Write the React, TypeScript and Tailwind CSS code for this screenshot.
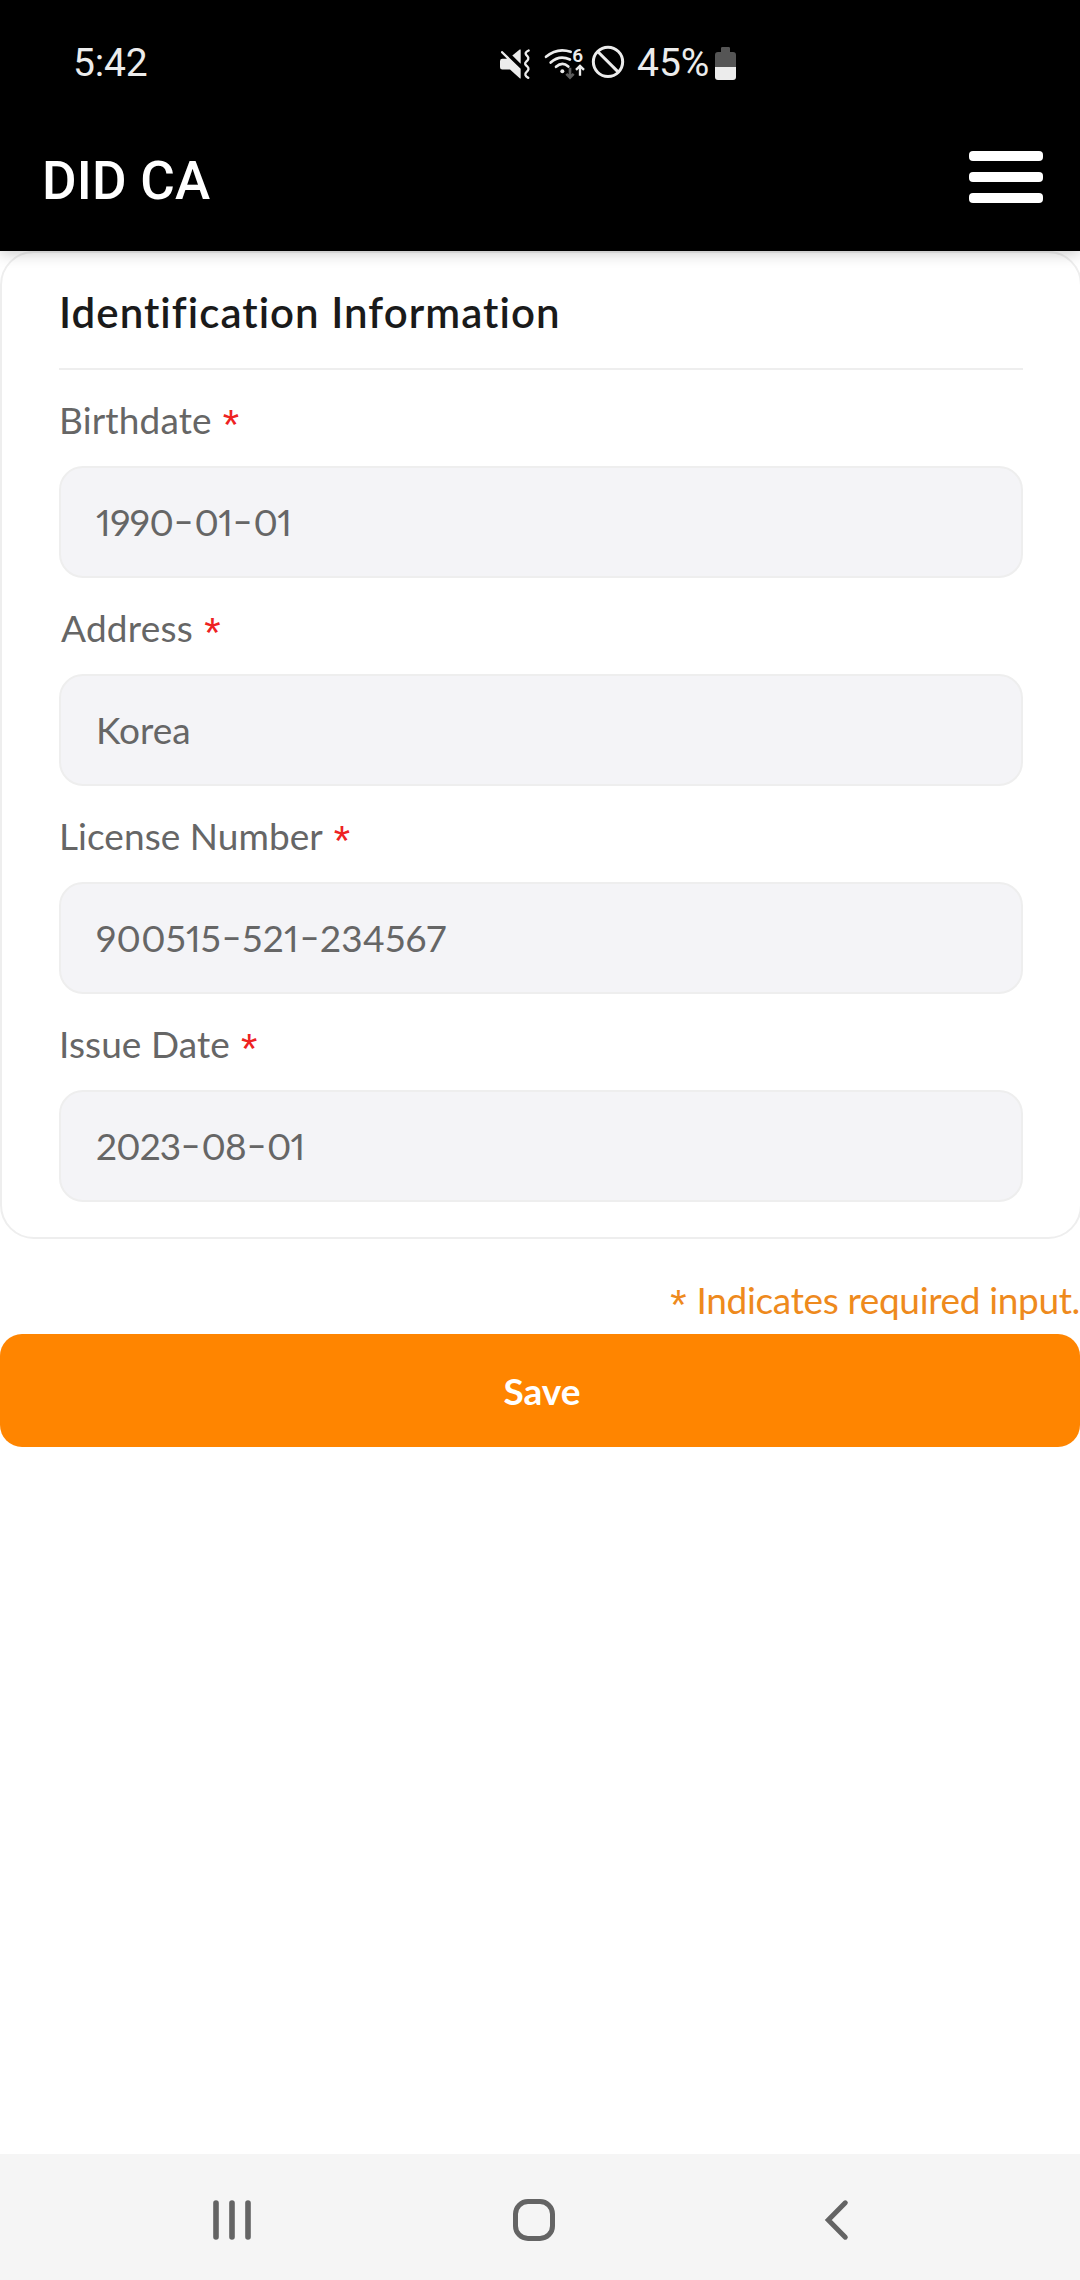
import { Fragment } from "react";

type FieldData = {
  label: string;
  value: string;
  labelClass: string;
  valueClass: string;
};

const fields: FieldData[] = [
  { label: "Birthdate", value: "1990-01-01", labelClass: "tracking-[0.15px]", valueClass: "tracking-[-0.5px]" },
  { label: "Address", value: "Korea", labelClass: "pl-[2px] tracking-[0.25px]", valueClass: "" },
  { label: "License Number", value: "900515-521-234567", labelClass: "tracking-[0.05px]", valueClass: "tracking-[0.3px]" },
  { label: "Issue Date", value: "2023-08-01", labelClass: "tracking-[0.1px]", valueClass: "tracking-[-0.8px]" },
];

function StatusIcons() {
  return (
    <svg viewBox="57 40 381 110" className="h-[37px] w-[127px]" fill="none">
      <path
        d="M63 66 Q62 60 68 61 L122 114 V143 H120 L90 116 H67 Q60 116 60 109 V91 Q60 84 67 84 H81 Z"
        fill="#ececec"
      />
      <path d="M97 74 L119 56 H122 V99 Z" fill="#ececec" />
      <path
        d="M146 59 C132 66 137 71 142 76 C148 82 144 88 139 92 C133 98 135 102 141 106 C148 112 146 118 140 123 C133 129 135 136 145 141"
        stroke="#ececec"
        strokeWidth="7"
        strokeLinecap="round"
      />
      <g stroke="#ececec" strokeWidth="8" strokeLinecap="round">
        <path d="M198 78 Q232 49 272 63" />
        <path d="M212 95 Q238 71 270 86" />
        <path d="M228 108 Q247 91 265 107" />
      </g>
      <circle cx="247" cy="121" r="6" fill="#ececec" />
      <text
        x="293"
        y="95"
        textAnchor="middle"
        fontSize="57"
        fill="#ececec"
        stroke="#000"
        strokeWidth="8"
        paintOrder="stroke"
        className="font-['Roboto',sans-serif] font-semibold"
      >
        6
      </text>
      <path d="M270 111 V140 M259 129 L270 140 L281 129" stroke="#5c5c5c" strokeWidth="8" />
      <path d="M300 135 V105 M288 117 L300 105 L312 117" stroke="#ececec" strokeWidth="7" />
      <circle cx="384" cy="93" r="44" stroke="#ececec" strokeWidth="9" />
      <path d="M353 62 L415 124" stroke="#ececec" strokeWidth="9" />
    </svg>
  );
}

function BatteryIcon() {
  return (
    <svg viewBox="705 51 63 99" className="mt-[2px] h-[33px] w-[21px]">
      <path d="M723 66 V55 Q723 51 727 51 H746 Q750 51 750 55 V66 H759 Q768 66 768 75 V111 H705 V75 Q705 66 714 66 Z" fill="#555" />
      <path d="M705 111 H768 V141 Q768 150 759 150 H714 Q705 150 705 141 Z" fill="#ececec" />
    </svg>
  );
}

function Asterisk({ className }: { className: string }) {
  return (
    <span className={`relative top-[5px] inline-block font-['Liberation_Sans',sans-serif] text-[42px] leading-none ${className}`}>
      *
    </span>
  );
}

function Value({ text }: { text: string }) {
  return (
    <>
      {text.split("-").map((part, i) => (
        <Fragment key={i}>
          {i > 0 && (
            <span className="inline-block w-[21px] -translate-y-[2px] scale-x-150 text-center tracking-normal">-</span>
          )}
          {part}
        </Fragment>
      ))}
    </>
  );
}

function Field({ label, value, labelClass, valueClass }: FieldData) {
  return (
    <div>
      <label className="flex h-[96px] items-center pt-[4px]">
        <span className={labelClass}>{label}</span>
        <Asterisk className="ml-[11px] text-[#ee2222]" />
      </label>
      <div className="flex h-[112px] items-center rounded-[24px] border-2 border-[#eeeeee] bg-[#f4f4f7] pl-[35px]">
        <span className={`proportional-nums ${valueClass}`}>
          <Value text={value} />
        </span>
      </div>
    </div>
  );
}

export default function App() {
  return (
    <div className="flex h-[2280px] w-[1080px] flex-col overflow-hidden bg-white font-['Lato',sans-serif] text-[37px] text-[#666666]">
      <header className="relative z-10 bg-black font-['Roboto',sans-serif] shadow-[0_2px_14px_rgba(0,0,0,0.22)]">
        <div className="flex h-[125px] items-center pl-[73px] text-[39px] text-[#ececec]">
          <span className="w-[426px] pt-[2px] tracking-[-0.2px]">5:42</span>
          <StatusIcons />
          <span className="ml-[11px] w-[78px] pt-[2px]">45%</span>
          <BatteryIcon />
        </div>
        <div className="flex h-[126px] items-center justify-between pr-[37px] pb-[17px] pl-[42px] text-white">
          <h1 className="pt-[3px] text-[53px] leading-none font-medium tracking-[0.2px]">DID CA</h1>
          <button className="mb-[5px] flex w-[74px] flex-col gap-[11px]" aria-label="Menu">
            <span className="h-[10px] rounded-[4px] bg-white" />
            <span className="h-[10px] rounded-[4px] bg-white" />
            <span className="h-[10px] rounded-[4px] bg-white" />
          </button>
        </div>
      </header>

      <main className="flex-1">
        <section className="-mr-[2px] rounded-[34px] border-2 border-[#eeeeee] px-[57px] pb-[35px]">
          <h2 className="flex h-[117px] items-center border-b-2 border-[#eeeeee] pt-[4px] text-[42px] font-semibold tracking-[1.05px] text-[#1a1a1a]">
            Identification Information
          </h2>
          {fields.map((f) => (
            <Field key={f.label} {...f} />
          ))}
        </section>
        <p className="flex h-[95px] items-center justify-end pt-[26px] text-[#ee8a1d]">
          <Asterisk className="mr-[10px]" />
          <span className="tracking-[-0.35px]">Indicates required input.</span>
        </p>
        <button className="flex h-[113px] w-full items-center justify-center rounded-[22px] bg-[#ff8500] pl-[4px] font-bold text-white">
          Save
        </button>
      </main>

      <nav className="flex h-[126px] items-center bg-[#f5f5f5] pt-[6px] pl-[213px]">
        <svg viewBox="0 0 38 42" className="h-[42px] w-[38px]" stroke="#646464" strokeWidth="5.6" strokeLinecap="round">
          <path d="M3 4 V38 M19 4 V38 M35 4 V38" />
        </svg>
        <span className="ml-[262px] h-[42px] w-[42px] rounded-[15px] border-[5px] border-[#646464]" />
        <svg viewBox="0 0 26 42" className="ml-[269px] h-[42px] w-[26px]" fill="none" stroke="#646464" strokeWidth="5" strokeLinecap="round">
          <path d="M21.3 3.8 L4.3 21 L21.3 38.2" />
        </svg>
      </nav>
    </div>
  );
}
